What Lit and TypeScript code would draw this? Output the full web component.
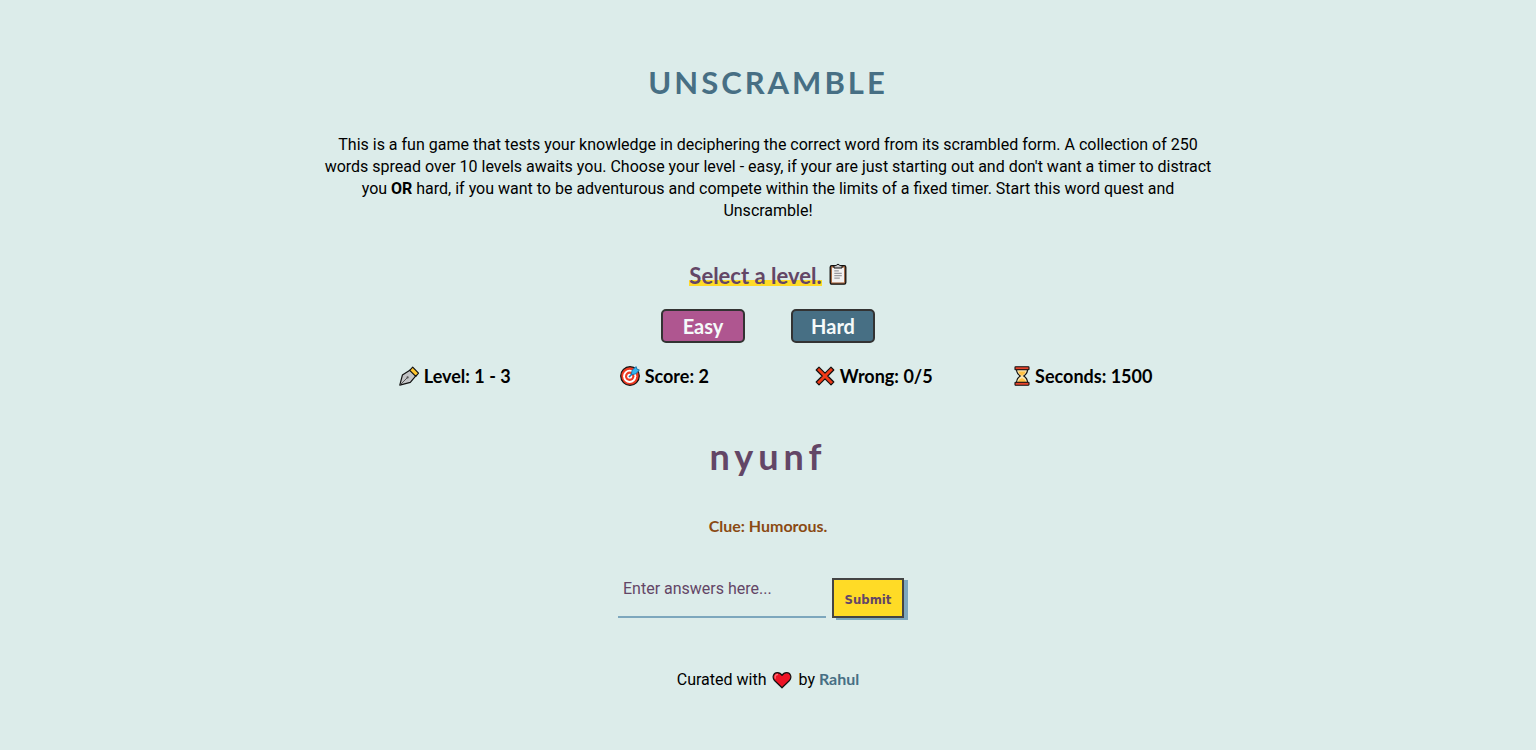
import { LitElement, html, css, svg } from "lit";
import { customElement, state } from "lit/decorators.js";

const clipboard = svg`<svg class="icon" viewBox="0 0 18 22" aria-hidden="true">
  <rect x="1.200" y="2.600" width="15.600" height="18.600" rx="1.600" fill="#a86b45" stroke="#111" stroke-width="1.300"/>
  <rect x="3" y="4.600" width="12" height="14.800" fill="#f3f1f1"/>
  <path d="M5 5V2.600h2.200a1.900 1.900 0 0 1 3.600 0H13V5z" fill="#c9c9cc" stroke="#111" stroke-width="1"/>
  <path d="M5.300 7.900h4.500M5.300 10.300h7.500M5.300 12.700h7.500M5.300 15.100h5.500" stroke="#85858c" stroke-width="1"/>
</svg>`;

const pen = svg`<svg class="icon" viewBox="0 0 20 20" aria-hidden="true">
  <path d="M.8 19.200 3.400 9.100l8.600-5.500 5 6-5.700 6.700z" fill="#c3c4c6" stroke="#111" stroke-width="1.200" stroke-linejoin="round"/>
  <path d="m10.700 4.300 3-3.100 5.800 5.900-2.700 3.300z" fill="#ffc52e" stroke="#111" stroke-width="1.200" stroke-linejoin="round"/>
  <path d="m1.500 18.500 6.800-6.800" stroke="#555" stroke-width="1"/>
  <circle cx="8.600" cy="11.400" r="1.100" fill="#555"/>
</svg>`;

const target = svg`<svg class="icon" viewBox="0 0 20 20" aria-hidden="true">
  <circle cx="10" cy="10" r="9.300" fill="#ee3a22" stroke="#111" stroke-width="1.200"/>
  <circle cx="9.700" cy="10.300" r="6.600" fill="#fff"/>
  <circle cx="9.700" cy="10.300" r="4.700" fill="#ee3a22"/>
  <circle cx="9.700" cy="10.300" r="2.500" fill="#fff"/>
  <path d="m9 11 5-5" stroke="#1676b8" stroke-width="1.700"/>
  <path d="m11.400 8.600.6-4.300L16.200.6l.7 2.500 2.500.8-3.700 4.100z" fill="#35b4ef" stroke="#0d6ba5" stroke-width=".8" stroke-linejoin="round"/>
</svg>`;

const cross = svg`<svg class="icon" viewBox="0 0 20 20" aria-hidden="true">
  <path d="m1.200 4 2.800-2.800L10 7.200l6-6L18.800 4l-6 6 6 6-2.800 2.800-6-6-6 6L1.200 16l6-6z" fill="#f03a17" stroke="#111" stroke-width="1.200" stroke-linejoin="round"/>
</svg>`;

const hourglass = svg`<svg class="icon slim" viewBox="0 0 16 20" aria-hidden="true">
  <path d="M2.500 3.500h11c0 3.400-1 4.700-3.700 6.500 2.700 1.800 3.700 3.100 3.700 6.500h-11c0-3.400 1-4.700 3.700-6.500C3.500 8.200 2.500 6.900 2.500 3.500z" fill="#fbe7b4" stroke="#111" stroke-width="1.200"/>
  <path d="M4.300 5.600h7.400C11 7.800 9.400 9 8 10 6.600 9 5 7.800 4.300 5.600zM4 16c.5-2.300 2.200-3.200 4-4 1.800.8 3.500 1.700 4 4z" fill="#ffc145"/>
  <rect x="1" y=".8" width="14" height="3" rx=".6" fill="#e8452c" stroke="#111" stroke-width="1.100"/>
  <rect x="1" y="16.200" width="14" height="3" rx=".6" fill="#e8452c" stroke="#111" stroke-width="1.100"/>
</svg>`;

const heart = svg`<svg class="icon" viewBox="0 0 20 20" aria-hidden="true">
  <path d="M10 17.800 2.500 10.500C-.2 7.300 1.400 2.600 5.400 2.600c1.900 0 3.500.9 4.600 2.800 1.100-1.900 2.700-2.800 4.600-2.800 4 0 5.600 4.700 2.900 7.900z" fill="#ec1325" stroke="#111" stroke-width="1.200" stroke-linejoin="round"/>
  <path d="M3.300 8.200c-.7-2 .5-3.700 2.200-3.700" fill="none" stroke="#ff6f74" stroke-width="1.300" stroke-linecap="round"/>
</svg>`;

@customElement("app-root")
export class AppRoot extends LitElement {
  @state() private answer = "";

  static styles = css`
    :host {
      display: block;
      box-sizing: border-box;
      min-height: 100vh;
      padding: 62px 16px;
      background: #dcecea;
      color: #000;
      font: 16px/22px Roboto, sans-serif;
    }
    * { box-sizing: border-box; }
    .page {
      display: flex;
      flex-direction: column;
      align-items: center;
      max-width: 904px;
      margin: 0 auto;
      text-align: center;
    }
    h1, h2, p { margin: 0; }
    .title, .prompt, .stats, .word, .clue, .author {
      font-family: Lato, sans-serif;
      font-weight: bold;
    }
    .title {
      color: #476f84;
      font-size: 31px;
      line-height: 40px;
      letter-spacing: 3px;
    }
    .intro { margin-top: 32px; }
    .prompt {
      display: flex;
      align-items: center;
      gap: 7px;
      margin-top: 41px;
      color: #634666;
      font-size: 22px;
      line-height: 24px;
    }
    .marked { background: linear-gradient(transparent 68%, #ffdb26 68%, #ffdb26 92%, transparent 92%); }
    .icon { flex: none; width: 20px; height: 20px; }
    .slim { width: 16px; }
    .prompt .icon { width: 18px; height: 22px; margin-bottom: 4px; }
    .levels { display: flex; gap: 46px; margin-top: 20px; }
    .level {
      width: 84px;
      height: 34px;
      padding: 0;
      border: 2px solid #333;
      border-radius: 5px;
      background: #476f84;
      color: #f5fafa;
      font: bold 20px/28px Lato, sans-serif;
    }
    .easy { background: #af5690; }
    .stats {
      display: grid;
      grid-template-columns: repeat(4, 1fr);
      width: 100%;
      max-width: 840px;
      margin-top: 22px;
      padding-left: 2px;
      font-size: 18px;
    }
    .stat { display: flex; align-items: center; justify-content: center; gap: 5px; }
    .word {
      margin-top: 45px;
      color: #634666;
      font-size: 36px;
      line-height: 48px;
      letter-spacing: 5px;
    }
    .clue { margin-top: 35px; color: #8a4a13; }
    .form { display: flex; gap: 6px; margin-top: 41px; padding-right: 14px; }
    .answer {
      width: 208px;
      height: 40px;
      padding: 0 5px 18px;
      border: 0;
      border-bottom: 2px solid #7da7bd;
      background: transparent;
      color: #634666;
      font: 16px/20px Roboto, sans-serif;
      outline: none;
    }
    .answer::placeholder { color: #634666; opacity: 1; }
    .submit {
      width: 72px;
      height: 40px;
      padding: 4px 0 0;
      border: 2px solid #444;
      background: #ffdb26;
      box-shadow: 4px 2px #7da7bd;
      color: #634666;
      font: bold 13px/20px "DejaVu Sans Condensed", "Noto Sans", sans-serif;
    }
    .credit { display: flex; align-items: center; gap: 6px; margin-top: 50px; }
    .author { color: #476f84; text-decoration: none; }
  `;

  private onInput(e: Event) {
    this.answer = (e.target as HTMLInputElement).value;
  }

  render() {
    return html`
      <main class="page">
        <h1 class="title">UNSCRAMBLE</h1>
        <p class="intro">
          This is a fun game that tests your knowledge in deciphering the correct word from its
          scrambled form. A collection of 250 words spread over 10 levels awaits you. Choose your
          level - easy, if your are just starting out and don't want a timer to distract you
          <strong>OR</strong> hard, if you want to be adventurous and compete within the limits of a
          fixed timer. Start this word quest and Unscramble!
        </p>
        <h2 class="prompt"><span class="marked">Select a level.</span>${clipboard}</h2>
        <div class="levels">
          <button class="level easy" type="button">Easy</button>
          <button class="level" type="button">Hard</button>
        </div>
        <div class="stats">
          <div class="stat">${pen}<span>Level: 1 - 3</span></div>
          <div class="stat">${target}<span>Score: 2</span></div>
          <div class="stat">${cross}<span>Wrong: 0/5</span></div>
          <div class="stat">${hourglass}<span>Seconds: 1500</span></div>
        </div>
        <h2 class="word">nyunf</h2>
        <p class="clue">Clue: Humorous.</p>
        <form class="form" @submit=${(e: Event) => e.preventDefault()}>
          <input class="answer" type="text" aria-label="Answer" placeholder="Enter answers here..." .value=${this.answer} @input=${this.onInput} />
          <button class="submit" type="submit">Submit</button>
        </form>
        <footer class="credit"><span>Curated with</span>${heart}<span>by <a class="author" href="#">Rahul</a></span></footer>
      </main>
    `;
  }
}
